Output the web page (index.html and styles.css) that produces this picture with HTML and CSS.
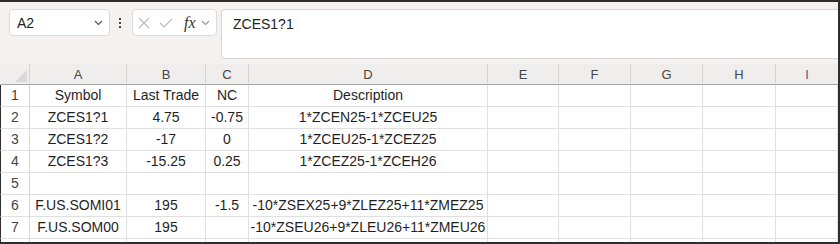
FILE: index.html
```html
<!DOCTYPE html>
<html>
<head>
  <title>Sheet</title>
  <link rel="stylesheet" href="styles.css">
</head>
<body>
  <div class="frame">
    <div class="toolbar">
      <div class="namebox">
        <span>A2</span>
        <svg width="9" height="6" viewBox="0 0 9 6"><path d="M1 1l3.5 3.5L8 1" stroke="#555" stroke-width="1.2" fill="none"/></svg>
      </div>
      <div class="kebab"><i></i><i></i><i></i></div>
      <div class="fxbox">
        <svg class="ico-x" width="12" height="12" viewBox="0 0 12 12"><path d="M1 1L11 11M11 1L1 11" stroke="#b9b9b9" stroke-width="1.1" fill="none"/></svg>
        <svg class="ico-ok" width="14" height="10" viewBox="0 0 14 10"><path d="M1 5L5 9L13 1" stroke="#b9b9b9" stroke-width="1.1" fill="none"/></svg>
        <span class="fx">fx</span>
        <svg class="ico-dd" width="9" height="6" viewBox="0 0 9 6"><path d="M1 1l3.5 3.5L8 1" stroke="#999" stroke-width="1.1" fill="none"/></svg>
      </div>
      <div class="formula">ZCES1?1</div>
    </div>

    <div class="sheet">
      <div class="corner"><span class="tri"></span></div>
      <div class="colhead">A</div>
      <div class="colhead">B</div>
      <div class="colhead">C</div>
      <div class="colhead">D</div>
      <div class="colhead">E</div>
      <div class="colhead">F</div>
      <div class="colhead">G</div>
      <div class="colhead">H</div>
      <div class="colhead col-i">I</div>

      <div class="rowhead">1</div>
      <div class="cell">Symbol</div><div class="cell">Last Trade</div><div class="cell">NC</div><div class="cell">Description</div>
      <div class="cell"></div><div class="cell"></div><div class="cell"></div><div class="cell"></div><div class="cell"></div>

      <div class="rowhead">2</div>
      <div class="cell">ZCES1?1</div><div class="cell">4.75</div><div class="cell">-0.75</div><div class="cell">1*ZCEN25-1*ZCEU25</div>
      <div class="cell"></div><div class="cell"></div><div class="cell"></div><div class="cell"></div><div class="cell"></div>

      <div class="rowhead">3</div>
      <div class="cell">ZCES1?2</div><div class="cell">-17</div><div class="cell">0</div><div class="cell">1*ZCEU25-1*ZCEZ25</div>
      <div class="cell"></div><div class="cell"></div><div class="cell"></div><div class="cell"></div><div class="cell"></div>

      <div class="rowhead">4</div>
      <div class="cell">ZCES1?3</div><div class="cell">-15.25</div><div class="cell">0.25</div><div class="cell">1*ZCEZ25-1*ZCEH26</div>
      <div class="cell"></div><div class="cell"></div><div class="cell"></div><div class="cell"></div><div class="cell"></div>

      <div class="rowhead">5</div>
      <div class="cell"></div><div class="cell"></div><div class="cell"></div><div class="cell"></div>
      <div class="cell"></div><div class="cell"></div><div class="cell"></div><div class="cell"></div><div class="cell"></div>

      <div class="rowhead">6</div>
      <div class="cell">F.US.SOMI01</div><div class="cell">195</div><div class="cell">-1.5</div><div class="cell">-10*ZSEX25+9*ZLEZ25+11*ZMEZ25</div>
      <div class="cell"></div><div class="cell"></div><div class="cell"></div><div class="cell"></div><div class="cell"></div>

      <div class="rowhead">7</div>
      <div class="cell">F.US.SOM00</div><div class="cell">195</div><div class="cell"></div><div class="cell">-10*ZSEU26+9*ZLEU26+11*ZMEU26</div>
      <div class="cell"></div><div class="cell"></div><div class="cell"></div><div class="cell"></div><div class="cell"></div>

      <div class="rowhead"></div>
      <div class="cell"></div><div class="cell"></div><div class="cell"></div><div class="cell"></div>
      <div class="cell"></div><div class="cell"></div><div class="cell"></div><div class="cell"></div><div class="cell"></div>
    </div>
  </div>
</body>
</html>
```

FILE: styles.css
```css
body {
  margin: 0;
  font-family: "Liberation Sans", Arial, sans-serif;
  color: #1f1f1f;
}

.frame {
  width: 840px;
  height: 244px;
  box-sizing: border-box;
  border-top: 2px solid #2e2e2e;
  border-right: 2px solid #2e2e2e;
  border-bottom: 2px solid #2e2e2e;
  overflow: hidden;
  background: #fff;
}

/* formula bar */
.toolbar {
  height: 62px;
  box-sizing: border-box;
  padding: 7px 0 0 9px;
  display: flex;
  align-items: flex-start;
  background: #f4f1ef;
}

.namebox {
  width: 101px;
  height: 27px;
  box-sizing: border-box;
  border: 1px solid #dedad8;
  border-radius: 4px;
  background: #fff;
  display: flex;
  align-items: center;
  justify-content: space-between;
  padding: 0 6px 0 7px;
  font-size: 14px;
  color: #222;
}

.kebab {
  margin-left: 9px;
  width: 3px;
  height: 27px;
  display: flex;
  flex-direction: column;
  justify-content: center;
  gap: 2px;
}
.kebab i {
  display: block;
  width: 2px;
  height: 2px;
  background: #444;
}

.fxbox {
  margin-left: 10px;
  width: 85px;
  height: 27px;
  box-sizing: border-box;
  border: 1px solid #dedad8;
  border-radius: 4px;
  background: #fff;
  display: flex;
  align-items: center;
}
.ico-x { margin-left: 5px; }
.ico-ok { margin-left: 9px; }
.fx {
  margin-left: 11px;
  font-family: "Liberation Serif", serif;
  font-style: italic;
  font-size: 16px;
  color: #333;
  line-height: 16px;
}
.ico-dd { margin-left: 5px; margin-top: 1px; }

.formula {
  margin-left: 4px;
  flex: 1;
  height: 50px;
  box-sizing: border-box;
  border: 1px solid #d8d4d2;
  border-right: none;
  border-radius: 4px 0 0 4px;
  background: #fff;
  padding: 4px 11px 0;
  font-size: 14px;
  line-height: 20px;
  color: #222;
}

/* grid */
.sheet {
  display: grid;
  grid-template-columns: 30px 97px 79px 43px 239px 71px 72px 72px 73px 1fr;
  grid-template-rows: 21px repeat(7, 22px) 22px;
}

.corner, .colhead {
  background: #f0eeed;
  border-right: 1px solid #d6d4d3;
  border-bottom: 1px solid #a3a3a3;
  box-sizing: border-box;
}
.corner {
  position: relative;
  border-left: 1px solid #f0eeed;
}
.tri {
  position: absolute;
  right: 2px;
  bottom: 2px;
  width: 0;
  height: 0;
  border-left: 12px solid transparent;
  border-bottom: 12px solid #d8d8d8;
}

.colhead {
  text-align: center;
  font-size: 13px;
  line-height: 18px;
  padding-top: 2px;
  color: #464646;
}
.col-i {
  border-right: none;
  color: #6f4a90;
}

.rowhead, .cell {
  box-sizing: border-box;
  border-right: 1px solid #e0e0e0;
  border-bottom: 1px solid #e0e0e0;
  line-height: 21px;
  font-size: 14px;
  white-space: nowrap;
}
.rowhead {
  border-left: 1px solid #2e2e2e;
  text-align: center;
  color: #444;
  border-right-color: #d6d6d6;
}
.cell {
  text-align: center;
  color: #1f1f1f;
  overflow: visible;
}
```
